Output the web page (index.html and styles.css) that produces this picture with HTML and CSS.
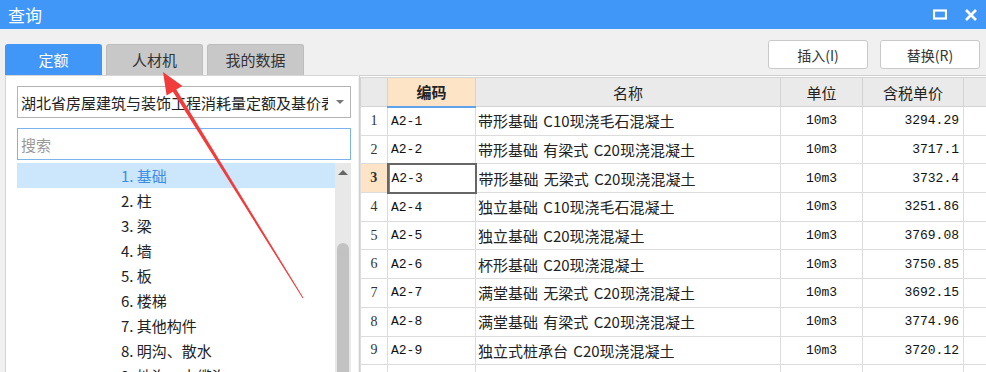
FILE: index.html
```html
<!DOCTYPE html>
<html lang="zh-CN">
<head>
    <meta charset="UTF-8">
    <title>查询</title>
    <link rel="stylesheet" href="styles.css">
</head>
<body>
<div class="window">
    <header class="titlebar">
        <span class="title">查询</span>
        <div class="win-controls">
            <svg width="14" height="12" viewBox="0 0 14 12"><rect x="1" y="1.5" width="12" height="8" fill="none" stroke="#fff" stroke-width="2.2"/></svg>
            <svg width="14" height="14" viewBox="0 0 14 14"><path d="M2 2 L12 12 M12 2 L2 12" stroke="#fff" stroke-width="2.6"/></svg>
        </div>
    </header>

    <div class="toolbar">
        <div class="tabs">
            <div class="tab active">定额</div>
            <div class="tab">人材机</div>
            <div class="tab">我的数据</div>
        </div>
        <div class="actions">
            <button class="btn">插入(I)</button>
            <button class="btn">替换(R)</button>
        </div>
    </div>

    <div class="main">
        <aside class="side">
            <div class="select">
                <span class="select-text">湖北省房屋建筑与装饰工程消耗量定额及基价表</span>
                <span class="caret"></span>
            </div>
            <input class="search" type="text" placeholder="搜索">
            <div class="tree">
                <ul class="tree-list">
                    <li class="selected">1. 基础</li>
                    <li>2. 柱</li>
                    <li>3. 梁</li>
                    <li>4. 墙</li>
                    <li>5. 板</li>
                    <li>6. 楼梯</li>
                    <li>7. 其他构件</li>
                    <li>8. 明沟、散水</li>
                    <li>9. 地沟、电缆沟</li>
                </ul>
                <div class="scrollbar">
                    <span class="scroll-up"></span>
                    <span class="scroll-thumb"></span>
                </div>
            </div>
        </aside>

        <section class="grid">
            <table>
                <colgroup>
                    <col class="c-no"><col class="c-code"><col class="c-name"><col class="c-unit"><col class="c-price"><col class="c-more">
                </colgroup>
                <thead>
                    <tr>
                        <th></th>
                        <th class="sorted">编码</th>
                        <th>名称</th>
                        <th>单位</th>
                        <th>含税单价</th>
                        <th>工程量</th>
                    </tr>
                </thead>
                <tbody>
                    <tr><td class="no">1</td><td class="code">A2-1</td><td class="name">带形基础 C10现浇毛石混凝土</td><td class="unit">10m3</td><td class="price">3294.29</td><td></td></tr>
                    <tr><td class="no">2</td><td class="code">A2-2</td><td class="name">带形基础 有梁式 C20现浇混凝土</td><td class="unit">10m3</td><td class="price">3717.1</td><td></td></tr>
                    <tr class="current"><td class="no">3</td><td class="code active-cell">A2-3</td><td class="name">带形基础 无梁式 C20现浇混凝土</td><td class="unit">10m3</td><td class="price">3732.4</td><td></td></tr>
                    <tr><td class="no">4</td><td class="code">A2-4</td><td class="name">独立基础 C10现浇毛石混凝土</td><td class="unit">10m3</td><td class="price">3251.86</td><td></td></tr>
                    <tr><td class="no">5</td><td class="code">A2-5</td><td class="name">独立基础 C20现浇混凝土</td><td class="unit">10m3</td><td class="price">3769.08</td><td></td></tr>
                    <tr><td class="no">6</td><td class="code">A2-6</td><td class="name">杯形基础 C20现浇混凝土</td><td class="unit">10m3</td><td class="price">3750.85</td><td></td></tr>
                    <tr><td class="no">7</td><td class="code">A2-7</td><td class="name">满堂基础 无梁式 C20现浇混凝土</td><td class="unit">10m3</td><td class="price">3692.15</td><td></td></tr>
                    <tr><td class="no">8</td><td class="code">A2-8</td><td class="name">满堂基础 有梁式 C20现浇混凝土</td><td class="unit">10m3</td><td class="price">3774.96</td><td></td></tr>
                    <tr><td class="no">9</td><td class="code">A2-9</td><td class="name">独立式桩承台 C20现浇混凝土</td><td class="unit">10m3</td><td class="price">3720.12</td><td></td></tr>
                    <tr><td class="no">10</td><td class="code">A2-10</td><td class="name">基础垫层 C15现浇混凝土</td><td class="unit">10m3</td><td class="price">3580.44</td><td></td></tr>
                </tbody>
            </table>
        </section>
    </div>

    <!-- annotation arrow drawn over the screenshot -->
    <svg class="arrow" width="986" height="372" viewBox="0 0 986 372">
        <polygon points="163,72 182.5,86 176.3,89.6 303.4,297.7 302.6,298.3 172.9,91.8 166.6,95.6" fill="#f23b3b"/>
    </svg>
</div>
</body>
</html>
```

FILE: styles.css
```css
/* General */
* {
    box-sizing: border-box;
}

body {
    margin: 0;
    font-family: "Noto Sans CJK SC", "Noto Sans", sans-serif;
    background: #f0f0f0;
    color: #222;
}

.window {
    position: relative;
    width: 986px;
    height: 372px;
    overflow: hidden;
    display: flex;
    flex-direction: column;
}

/* Title bar */
.titlebar {
    height: 29px;
    flex-shrink: 0;
    background: #4097f7;
    display: flex;
    align-items: center;
    justify-content: space-between;
    padding: 0 8px 0 8px;
}

.title {
    color: #fff;
    font-size: 17px;
    line-height: 1;
}

.win-controls {
    display: flex;
    align-items: center;
    gap: 17px;
}

.win-controls svg {
    display: block;
}

/* Tabs + buttons */
.toolbar {
    height: 46px;
    flex-shrink: 0;
    display: flex;
    justify-content: space-between;
}

.tabs {
    display: flex;
    align-items: flex-end;
    gap: 4px;
    padding-left: 5px;
}

.tab {
    width: 97px;
    height: 31px;
    line-height: 30px;
    text-align: center;
    font-size: 15px;
    color: #333;
    background: #c8c8c8;
    border: 1px solid #bdbdbd;
    border-bottom: none;
    border-radius: 3px 3px 0 0;
}

.tab.active {
    background: #4097f7;
    border-color: #4097f7;
    color: #fff;
}

.actions {
    display: flex;
    gap: 12px;
    padding: 11px 6px 0 0;
}

.btn {
    width: 100px;
    height: 29px;
    font-family: inherit;
    font-size: 14px;
    color: #333;
    background: #fff;
    border: 1px solid #c9c9c9;
    border-radius: 3px;
    padding: 0;
}

/* Main area */
.main {
    flex: 1;
    display: flex;
    min-height: 0;
}

.side {
    width: 353px;
    margin-left: 5px;
    background: #fff;
    border-top: 1px solid #d6d6d6;
    border-left: 1px solid #d6d6d6;
    padding: 10px 7px 0 11px;
    display: flex;
    flex-direction: column;
}

.select {
    height: 32px;
    border: 1px solid #b4b4b4;
    display: flex;
    align-items: center;
    padding: 0 6px 0 3px;
    overflow: hidden;
}

.select-text {
    flex: 1;
    white-space: nowrap;
    overflow: hidden;
    font-size: 15px;
    color: #222;
}

.caret {
    width: 0;
    height: 0;
    margin-left: 8px;
    border-left: 4px solid transparent;
    border-right: 4px solid transparent;
    border-top: 4px solid #777;
}

.search {
    margin-top: 10px;
    height: 32px;
    width: 100%;
    border: 1px solid #7db3eb;
    padding: 0 3px;
    font-family: inherit;
    font-size: 15px;
    outline: none;
}

.search::placeholder {
    color: #999;
}

.tree {
    flex: 1;
    margin-top: 3px;
    display: flex;
    min-height: 0;
}

.tree-list {
    flex: 1;
    list-style: none;
    margin: 0;
    padding: 0;
}

.tree-list li {
    height: 25px;
    line-height: 25px;
    padding-left: 104px;
    font-size: 15px;
    color: #222;
}

.tree-list li.selected {
    background: #cce6fc;
    color: #3b8ee3;
}

.scrollbar {
    width: 16px;
    background: #e8e8e8;
    display: flex;
    flex-direction: column;
    align-items: center;
}

.scroll-up {
    margin-top: 7px;
    width: 0;
    height: 0;
    border-left: 5px solid transparent;
    border-right: 5px solid transparent;
    border-bottom: 5px solid #666;
}

.scroll-thumb {
    margin-top: 68px;
    width: 12px;
    flex: 1;
    background: #c2c2c2;
    border-radius: 6px 6px 0 0;
}

/* Grid */
.grid {
    flex: 1;
    margin-left: 1px;
    background: #fff;
    border-top: 1px solid #cfcfcf;
    border-left: 1px solid #cfcfcf;
    padding-top: 1px;
    overflow: hidden;
}

table {
    border-collapse: collapse;
    table-layout: fixed;
    width: 703px;
}

.c-no { width: 27px; }
.c-code { width: 88px; }
.c-name { width: 305px; }
.c-unit { width: 82px; }
.c-price { width: 101px; }
.c-more { width: 100px; }

th {
    height: 29px;
    background: #eaeaea;
    border: 1px solid #d4d4d4;
    font-weight: normal;
    font-size: 15px;
    color: #222;
    white-space: nowrap;
    overflow: hidden;
}

th.sorted {
    background: #fde4c6;
    font-weight: bold;
    border-bottom: 2px solid #5ea2ee;
}

td {
    height: 28.7px;
    border: 1px solid #dcdcdc;
    padding: 0 3px;
    white-space: nowrap;
    overflow: hidden;
    font-size: 15px;
}

td.no {
    text-align: center;
    font-family: "Liberation Serif", serif;
    font-size: 14px;
    color: #333;
    padding: 0;
}

td.code {
    font-family: "Liberation Mono", monospace;
    font-size: 13px;
    color: #111;
}

td.name {
    padding-left: 2px;
    word-spacing: 2px;
}

td.unit {
    text-align: center;
    font-family: "Liberation Mono", monospace;
    font-size: 13px;
    color: #111;
}

td.price {
    text-align: right;
    padding-right: 4px;
    font-family: "Liberation Mono", monospace;
    font-size: 13px;
    color: #111;
}

tr.current td.no {
    background: #fde4c6;
    font-weight: bold;
}

td.active-cell {
    border: 2px solid #666;
    box-shadow: inset 1px 0 0 #4a90e2;
}

/* Annotation overlay */
.arrow {
    position: absolute;
    top: 0;
    left: 0;
    pointer-events: none;
}
```
